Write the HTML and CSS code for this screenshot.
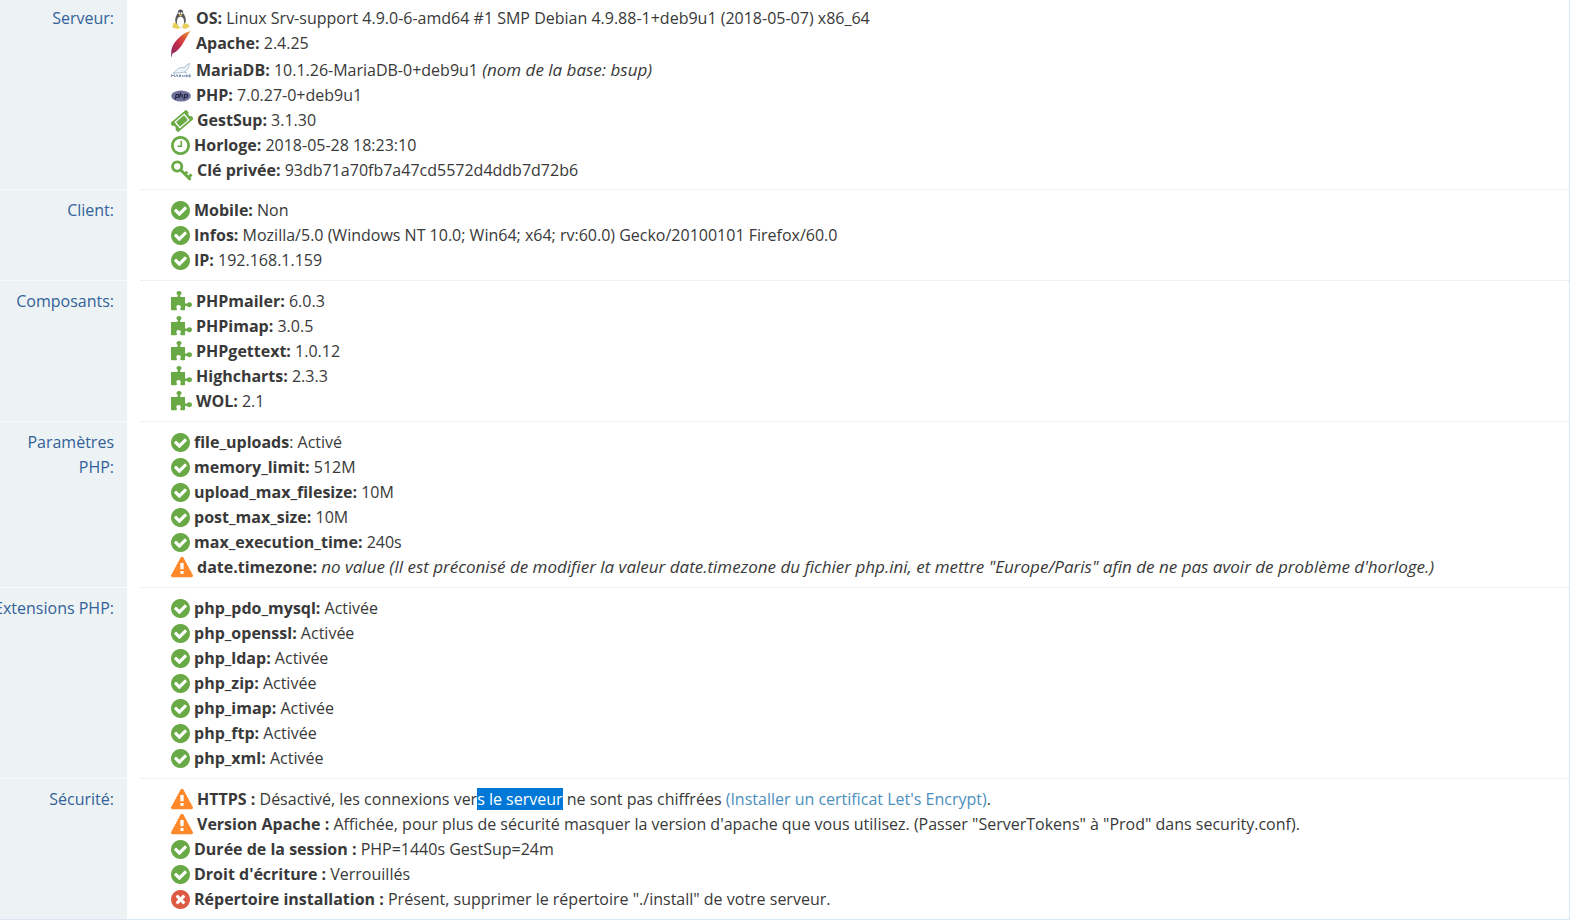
FILE: index.html
```
<!DOCTYPE html>
<html lang="fr">
<head>
<meta charset="utf-8">
<title>Informations système</title>
<link rel="stylesheet" href="styles.css">
</head>
<body>
<svg class="sprite" aria-hidden="true">
  <symbol id="ok" viewBox="128 128 1536 1536"><path d="M1412 734q0-28-18-46l-91-90q-19-19-45-19t-45 19l-408 407-226-226q-19-19-45-19t-45 19l-91 90q-18 18-18 46 0 27 18 45l362 362q19 19 45 19 27 0 46-19l543-543q18-18 18-45zm252 162q0 209-103 385.5t-279.5 279.5-385.5 103-385.5-103-279.5-279.5-103-385.5 103-385.5 279.5-279.5 385.5-103 385.5 103 279.5 279.5 103 385.5z"/></symbol>
  <symbol id="bad" viewBox="128 128 1536 1536"><path d="M1277 1122q0-26-19-45l-181-181 181-181q19-19 19-45 0-27-19-46l-90-90q-19-19-46-19-26 0-45 19l-181 181-181-181q-19-19-45-19-27 0-46 19l-90 90q-19 19-19 46 0 26 19 45l181 181-181 181q-19 19-19 45 0 27 19 46l90 90q19 19 46 19 26 0 45-19l181-181 181 181q19 19 45 19 27 0 46-19l90-90q19-19 19-46zm387-226q0 209-103 385.5t-279.5 279.5-385.5 103-385.5-103-279.5-279.5-103-385.5 103-385.5 279.5-279.5 385.5-103 385.5 103 279.5 279.5 103 385.5z"/></symbol>
  <symbol id="clock" viewBox="128 128 1536 1536"><path d="M1024 544v448q0 14-9 23t-23 9h-320q-14 0-23-9t-9-23v-64q0-14 9-23t23-9h224v-352q0-14 9-23t23-9h64q14 0 23 9t9 23zm416 352q0-148-73-273t-198-198-273-73-273 73-198 198-73 273 73 273 198 198 273 73 273-73 198-198 73-273zm224 0q0 209-103 385.5t-279.5 279.5-385.5 103-385.5-103-279.5-279.5-103-385.5 103-385.5 279.5-279.5 385.5-103 385.5 103 279.5 279.5 103 385.5z"/></symbol>
  <symbol id="warn" viewBox="0 0 1792 1664"><path d="M1024 1375v-190q0-14-9.500-23.500t-22.500-9.500h-192q-13 0-22.500 9.500t-9.500 23.500v190q0 14 9.500 23.500t22.500 9.500h192q13 0 22.500-9.500t9.500-23.500zm-2-374l18-459q0-12-10-19-13-11-24-11h-220q-11 0-24 11-10 7-10 21l17 457q0 10 10 16.500t24 6.500h185q14 0 23.500-6.500t10.500-16.500zm-14-934l768 1408q35 63-2 126-17 29-46.500 46t-63.500 17h-1536q-34 0-63.500-17t-46.500-46q-37-63-2-126l768-1408q17-31 47-49t65-18 65 18 47 49z"/></symbol>
  <symbol id="ticket" viewBox="0 0 22 22"><g transform="rotate(-40 11 11)"><path fill-rule="evenodd" d="M1.500 5h19a1 1 0 0 1 1 1v2.800a2.300 2.300 0 0 0 0 4.400V16a1 1 0 0 1-1 1h-19a1 1 0 0 1-1-1v-2.800a2.300 2.300 0 0 0 0-4.400V6a1 1 0 0 1 1-1zM4.500 6.800v8.400h13V6.800zM5.800 8h10.400v6H5.800z"/></g></symbol>
  <symbol id="key" viewBox="0 0 22 22"><g fill="none" stroke="currentColor" stroke-width="2.900"><circle cx="6.200" cy="6.500" r="4.600"/><path d="M9.500 9.800L19.500 19.800M13.300 14.800l3-3M16.700 18.200l3.800-3.800"/></g></symbol>
  <symbol id="puzzle" viewBox="0 0 21 20"><path d="M0 6h3.500q3.500.4 3.500-1.200c0-.8-1.500-1.300-1.500-2.800C5.500.8 6.500 0 8 0s2.500.8 2.500 2c0 1.500-1.500 2-1.500 2.800C9 6.400 10 6 14 6v4.500c0 1.500.4 2.300 1.200 2.300.9 0 1.300-1.500 3-1.500 1.500 0 2.800.8 2.800 2.400s-1.200 2.500-2.700 2.500-2.200-1.400-3.100-1.400c-.8 0-1.200.8-1.200 1.700V19q-2 .5-4.200 0c-1.400-.6-.1-1.700 0-2.800.1-1.500-.9-2.200-2.200-2.200s-2.400.9-2.200 2.300c.2 1 1.300 2.200.1 2.700Q3 19.500 0 19z"/></symbol>
  <symbol id="linux" viewBox="0 0 20 20">
    <ellipse cx="9.500" cy="11" rx="5.300" ry="7.500" fill="#5a5a5a"/>
    <ellipse cx="9.500" cy="4.500" rx="2.800" ry="4" fill="#555"/>
    <ellipse cx="9.500" cy="13" rx="3.600" ry="5.600" fill="#fff"/>
    <circle cx="8.300" cy="4.300" r="1" fill="#fff"/><circle cx="10.700" cy="4.300" r="1" fill="#fff"/>
    <path d="M7.800 6l1.700-.8 1.900.8-1.800 1.300zM2.300 14l2.500-.2 4 4.700c-.4 1.300-2.200 1.700-3.400 1.300L1.700 18.500c-.8-1 .4-2.700.6-4.500zM12 15.500l1.300-1.500 1.700 1 1.500-.6 2.300 3.100-4 2.200c-1.500.5-3.400-.2-3.300-1.600z" fill="#e6d05a"/>
  </symbol>
  <symbol id="feather" viewBox="0 0 20 27">
    <linearGradient id="quill" x1="1" y1="0" x2="0" y2="1"><stop offset="0" stop-color="#eda33c"/><stop offset=".3" stop-color="#dc5538"/><stop offset=".55" stop-color="#c42d4a"/><stop offset="1" stop-color="#7d2a68"/></linearGradient>
    <path d="M19.500 0C12 2 7 7 3 12.500.8 16 .2 19 .2 22L.3 27l1.300-4.500c4-1.500 7-5 9.400-8.500C13.600 10 16 5 19.500 0z" fill="url(#quill)"/>
  </symbol>
  <symbol id="mariadb" viewBox="0 0 20 15">
    <path d="M2 10c2-.5 3-3 5.500-4.500S11 5 13 4.500s1.500-2.500 3-3 2-.8 2.800-1c-.3 1.700-1 1.600-1.300 3C17 6 16 7.500 13.500 8.500l2 1.500-3.300-.8c-3 .8-5.200.2-7.200 1z" fill="#edf3f8" stroke="#8fa9c4" stroke-width=".7"/>
    <path d="M.5 14v-2.500L2 13l1.500-1.500V14M4.500 14L6 11.700 7.300 14M8.500 14v-2h1.400l-1 1 1.400 1M11.500 14v-2M12.500 14l1-2 1 2M15.500 14v-2.200c2 0 2 2 0 2.200M18 11.800v2.200h1.300v-2.200H18" fill="none" stroke="#6881a3" stroke-width=".8"/>
  </symbol>
  <symbol id="php" viewBox="0 0 20 12">
    <ellipse cx="10" cy="6" rx="9.800" ry="5.600" fill="#6f709c"/>
    <path d="M4.200 9.500l1-5h1.600c1.700 0 1.400 3-.5 3H4.800M9.500 2.700l-1 5M9.200 4.700h1.400c1 0 .8.800.3 3M12.800 9.500l1-5h1.600c1.700 0 1.400 3-.5 3h-1.500" fill="none" stroke="#20203a" stroke-width="1.100"/>
  </symbol>
</svg>
<dl class="info">
  <div class="row first"><dt>Serveur:</dt><dd><ul>
    <li><svg class="logo tux"><use href="#linux"/></svg><span><b>OS:</b> Linux Srv-support 4.9.0-6-amd64 #1 SMP Debian 4.9.88-1+deb9u1 (2018-05-07) x86_64</span></li>
    <li class="tall"><svg class="logo quill"><use href="#feather"/></svg><span><b>Apache:</b> 2.4.25</span></li>
    <li><svg class="logo seal"><use href="#mariadb"/></svg><span><b>MariaDB:</b> 10.1.26-MariaDB-0+deb9u1 <i>(nom de la base: bsup)</i></span></li>
    <li><svg class="logo oval"><use href="#php"/></svg><span><b>PHP:</b> 7.0.27-0+deb9u1</span></li>
    <li><svg class="icon wide green"><use href="#ticket"/></svg><span><b>GestSup:</b> 3.1.30</span></li>
    <li><svg class="icon round green"><use href="#clock"/></svg><span><b>Horloge:</b> 2018-05-28 18:23:10</span></li>
    <li><svg class="icon wide green"><use href="#key"/></svg><span><b>Clé privée:</b> 93db71a70fb7a47cd5572d4ddb7d72b6</span></li>
  </ul></dd></div>
  <div class="row"><dt>Client:</dt><dd><ul>
    <li><svg class="icon round green"><use href="#ok"/></svg><span><b>Mobile:</b> Non</span></li>
    <li><svg class="icon round green"><use href="#ok"/></svg><span><b>Infos:</b> Mozilla/5.0 (Windows NT 10.0; Win64; x64; rv:60.0) Gecko/20100101 Firefox/60.0</span></li>
    <li><svg class="icon round green"><use href="#ok"/></svg><span><b>IP:</b> 192.168.1.159</span></li>
  </ul></dd></div>
  <div class="row"><dt>Composants:</dt><dd><ul>
    <li><svg class="icon piece green"><use href="#puzzle"/></svg><span><b>PHPmailer:</b> 6.0.3</span></li>
    <li><svg class="icon piece green"><use href="#puzzle"/></svg><span><b>PHPimap:</b> 3.0.5</span></li>
    <li><svg class="icon piece green"><use href="#puzzle"/></svg><span><b>PHPgettext:</b> 1.0.12</span></li>
    <li><svg class="icon piece green"><use href="#puzzle"/></svg><span><b>Highcharts:</b> 2.3.3</span></li>
    <li><svg class="icon piece green"><use href="#puzzle"/></svg><span><b>WOL:</b> 2.1</span></li>
  </ul></dd></div>
  <div class="row"><dt>Paramètres PHP:</dt><dd><ul>
    <li><svg class="icon round green"><use href="#ok"/></svg><span><b>file_uploads</b>: Activé</span></li>
    <li><svg class="icon round green"><use href="#ok"/></svg><span><b>memory_limit:</b> 512M</span></li>
    <li><svg class="icon round green"><use href="#ok"/></svg><span><b>upload_max_filesize:</b> 10M</span></li>
    <li><svg class="icon round green"><use href="#ok"/></svg><span><b>post_max_size:</b> 10M</span></li>
    <li><svg class="icon round green"><use href="#ok"/></svg><span><b>max_execution_time:</b> 240s</span></li>
    <li><svg class="icon wide orange"><use href="#warn"/></svg><span><b>date.timezone:</b> <i>no value (Il est préconisé de modifier la valeur date.timezone du fichier php.ini, et mettre "Europe/Paris" afin de ne pas avoir de problème d'horloge.)</i></span></li>
  </ul></dd></div>
  <div class="row"><dt>Extensions PHP:</dt><dd><ul>
    <li><svg class="icon round green"><use href="#ok"/></svg><span><b>php_pdo_mysql:</b> Activée</span></li>
    <li><svg class="icon round green"><use href="#ok"/></svg><span><b>php_openssl:</b> Activée</span></li>
    <li><svg class="icon round green"><use href="#ok"/></svg><span><b>php_ldap:</b> Activée</span></li>
    <li><svg class="icon round green"><use href="#ok"/></svg><span><b>php_zip:</b> Activée</span></li>
    <li><svg class="icon round green"><use href="#ok"/></svg><span><b>php_imap:</b> Activée</span></li>
    <li><svg class="icon round green"><use href="#ok"/></svg><span><b>php_ftp:</b> Activée</span></li>
    <li><svg class="icon round green"><use href="#ok"/></svg><span><b>php_xml:</b> Activée</span></li>
  </ul></dd></div>
  <div class="row"><dt>Sécurité:</dt><dd><ul>
    <li><svg class="icon wide orange"><use href="#warn"/></svg><span><b>HTTPS :</b> Désactivé, les connexions ver<span class="selected">s le serveur</span> ne sont pas chiffrées <a href="#">(Installer un certificat Let's Encrypt)</a>.</span></li>
    <li><svg class="icon wide orange"><use href="#warn"/></svg><span><b>Version Apache :</b> Affichée, pour plus de sécurité masquer la version d'apache que vous utilisez. (Passer "ServerTokens" à "Prod" dans security.conf).</span></li>
    <li><svg class="icon round green"><use href="#ok"/></svg><span><b>Durée de la session :</b> PHP=1440s GestSup=24m</span></li>
    <li><svg class="icon round green"><use href="#ok"/></svg><span><b>Droit d'écriture :</b> Verrouillés</span></li>
    <li><svg class="icon round red"><use href="#bad"/></svg><span><b>Répertoire installation :</b> Présent, supprimer le répertoire "./install" de votre serveur.</span></li>
  </ul></dd></div>
</dl>
</body>
</html>
```
FILE: styles.css
```
body {
  margin: 0;
  background: #fff;
  color: #393939;
  font: 16px/25px "Open Sans", sans-serif;
}

.sprite {
  position: absolute;
  width: 0;
  height: 0;
}

.info {
  margin: 0 2px 0 -10px;
  border-right: 1px solid #dce8f1;
  border-bottom: 1px solid #dce8f1;
}

.row {
  display: grid;
  grid-template-columns: 137px 1fr;
  column-gap: 14px;
}

dt {
  padding: 8px 13px 7px 0;
  border-top: 1px solid #f7fbff;
  background: #edf3f4;
  color: #336199;
  text-align: right;
}

dd {
  margin: 0;
  padding: 8px 0 7px 30px;
  border-top: 1px dotted #dfe6ec;
}

.first dt,
.first dd {
  padding-top: 6px;
  padding-bottom: 6px;
  border-top: 0;
}

ul {
  margin: 0;
  padding: 0;
  list-style: none;
}

li {
  display: flex;
  align-items: center;
  gap: 4px;
}

.tall {
  align-items: flex-start;
}

i {
  font-size: 17px;
  line-height: 1;
}

a {
  color: #4c8fbd;
  text-decoration: none;
}

.selected {
  background: #0078d7;
  color: #fff;
}

.icon,
.logo {
  flex: none;
  fill: currentColor;
}

.logo {
  width: 20px;
  margin-right: 1px;
}

.tux {
  height: 20px;
}

.quill {
  height: 27px;
}

.seal {
  height: 15px;
}

.oval {
  height: 12px;
}

.round {
  width: 19px;
  height: 19px;
}

.wide {
  width: 22px;
  height: 22px;
}

.piece {
  width: 21px;
  height: 20px;
  margin-bottom: 2px;
}

.green {
  color: #69aa46;
}

.orange {
  margin-bottom: 2px;
  color: #ff892a;
}

.red {
  color: #dd5a43;
}
```
